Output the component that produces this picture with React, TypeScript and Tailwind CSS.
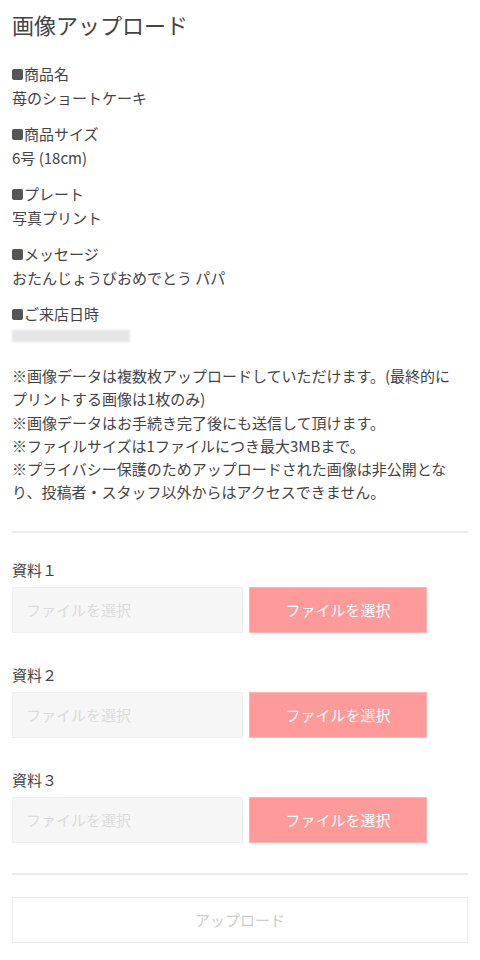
const font = { fontFamily: '"Noto Sans CJK JP", "Noto Sans", sans-serif' };

const items = [
  { label: '商品名', value: '苺のショートケーキ' },
  { label: '商品サイズ', value: '6号 (18cm)' },
  { label: 'プレート', value: '写真プリント' },
  { label: 'メッセージ', value: 'おたんじょうびおめでとう パパ' },
];

function FileRow({ n }: { n: string }) {
  return (
    <div className="mb-[30px]">
      <p className="text-[15px] leading-[24px] text-[#444] mb-[5px]">資料{n}</p>
      <div className="flex gap-[6px]">
        <div className="w-[231px] h-[46px] bg-[#f6f6f6] border border-[#eeeeee] flex items-center px-[13px] text-[15px] text-[#dcdcdc]">
          ファイルを選択
        </div>
        <button className="w-[178px] h-[46px] bg-[#ff9a9a] border border-[#ffb3b3] text-white text-[15px] flex items-center justify-center">
          ファイルを選択
        </button>
      </div>
    </div>
  );
}

export default function App() {
  return (
    <div className="min-h-screen bg-white px-3 pt-[8px] text-[#444]" style={font}>
      <h1 className="text-[22px] leading-[33px] text-[#444] mb-[21px]">画像アップロード</h1>

      {items.map((it) => (
        <div key={it.label} className="mb-3 text-[15px] leading-[24px]">
          <p className="flex items-center">
            <span className="inline-block w-[11px] h-[11px] bg-[#555] rounded-[2px] mr-[1px]"></span>
            {it.label}
          </p>
          <p>{it.value}</p>
        </div>
      ))}

      <div className="text-[15px] leading-[24px]">
        <p className="flex items-center">
          <span className="inline-block w-[11px] h-[11px] bg-[#555] rounded-[2px] mr-[1px]"></span>
          ご来店日時
        </p>
        <div className="h-[20px] flex items-center">
          <div className="w-[118px] h-[12px] bg-[#e6e6e6] blur-[1px]"></div>
        </div>
      </div>

      <div className="mt-[18px] text-[15px] leading-[23.3px] text-[#444]">
        <p>
          ※画像データは複数枚アップロードしていただけます。(最終的に
          <br />
          プリントする画像は1枚のみ)
        </p>
        <p>※画像データはお手続き完了後にも送信して頂けます。</p>
        <p>※ファイルサイズは1ファイルにつき最大3MBまで。</p>
        <p>※プライバシー保護のためアップロードされた画像は非公開となり、投稿者・スタッフ以外からはアクセスできません。</p>
      </div>

      <hr className="mt-[27px] mb-[25px] border-t-2 border-[#ebebeb]" />

      <FileRow n="１" />
      <FileRow n="２" />
      <FileRow n="３" />

      <hr className="border-t-2 border-[#ebebeb] mb-[22px]" />

      <button className="w-full h-[46px] border border-[#eeeeee] text-[15px] text-[#cccccc] bg-white">
        アップロード
      </button>
    </div>
  );
}
